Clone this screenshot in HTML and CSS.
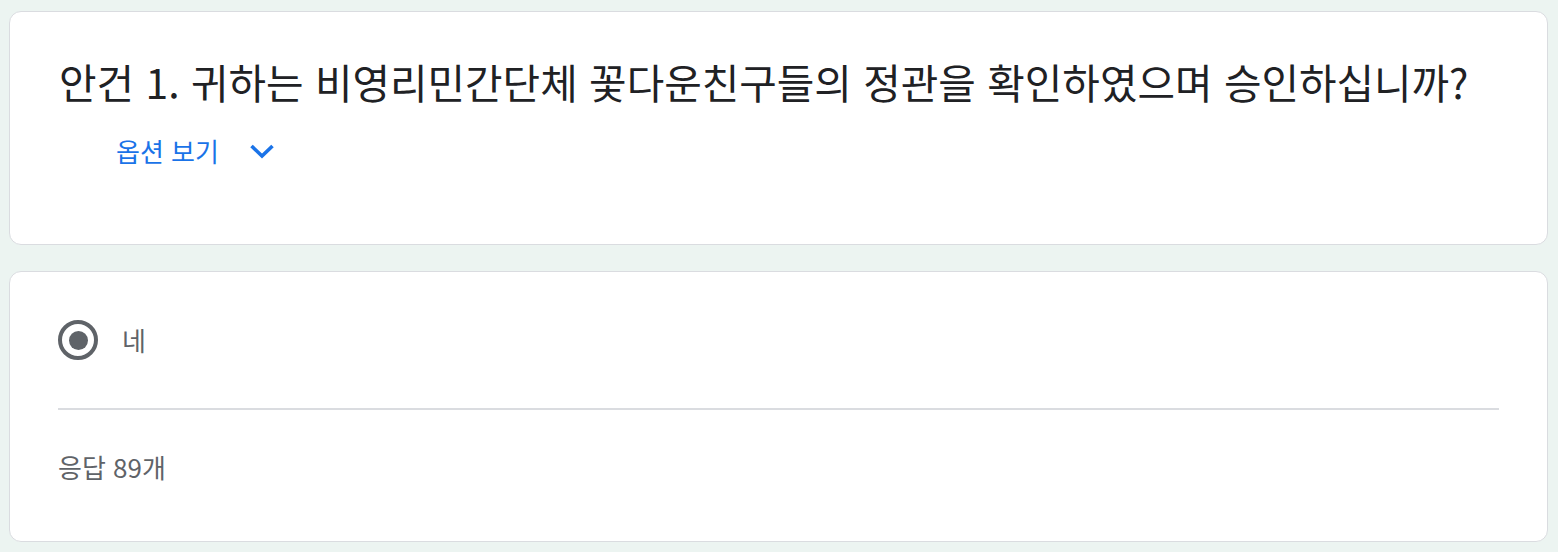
FILE: index.html
```html
<!DOCTYPE html>
<html lang="ko">
<head>
<meta charset="utf-8">
<link rel="stylesheet" href="styles.css">
</head>
<body>
<div class="page">
  <section class="card question">
    <h1 class="title">안건 1. 귀하는 비영리민간단체 꽃다운친구들의 정관을 확인하였으며 승인하십니까?</h1>
    <div class="options-toggle">
      <span class="options-label">옵션 보기</span>
      <svg class="chevron" width="26" height="16" viewBox="0 0 26 16"><polyline points="2.5,3 13,13 23.5,3" fill="none" stroke="#1a73e8" stroke-width="3.6" stroke-linejoin="miter" stroke-linecap="butt"/></svg>
    </div>
  </section>
  <section class="card answer">
    <div class="choice">
      <span class="radio"><span class="dot"></span></span>
      <span class="choice-label">네</span>
    </div>
    <div class="divider"></div>
    <div class="count">응답 89개</div>
  </section>
</div>
</body>
</html>
```
FILE: styles.css
```css
html, body {
  margin: 0;
  padding: 0;
  background: #ecf4f1;
}
body {
  font-family: "Noto Sans CJK KR", "Noto Sans", sans-serif;
}
.page {
  padding: 11px 10px 0 9px;
  display: flex;
  flex-direction: column;
  gap: 26px;
}
.card {
  background: #ffffff;
  border: 1px solid #dadce0;
  border-radius: 12px;
}
.question {
  height: 234px;
  padding: 0 48px 0 49px;
  box-sizing: border-box;
}
.title {
  margin: 0;
  padding-top: 46px;
  font-size: 40.8px;
  font-weight: 400;
  line-height: 48px;
  color: #202124;
  letter-spacing: 0;
  white-space: nowrap;
}
.options-toggle {
  display: flex;
  align-items: center;
  gap: 30px;
  padding-left: 57px;
  margin-top: 27px;
}
.options-label {
  font-size: 26px;
  line-height: 36px;
  color: #1a73e8;
}
.chevron {
  display: block;
}
.answer {
  height: 271px;
  box-sizing: border-box;
  padding: 0 48px 0 48px;
}
.choice {
  display: flex;
  align-items: center;
  gap: 24px;
  padding-top: 47px;
  height: 42px;
}
.radio {
  width: 40px;
  height: 40px;
  box-sizing: border-box;
  border: 4px solid #5f6368;
  border-radius: 50%;
  display: flex;
  align-items: center;
  justify-content: center;
}
.dot {
  width: 19px;
  height: 19px;
  border-radius: 50%;
  background: #5f6368;
}
.choice-label {
  font-size: 26px;
  color: #5f6368;
  line-height: 32px;
}
.divider {
  height: 2px;
  background: #dadce0;
  margin-top: 47px;
}
.count {
  margin-top: 42px;
  font-size: 26px;
  line-height: 30px;
  color: #5f6368;
}
```
